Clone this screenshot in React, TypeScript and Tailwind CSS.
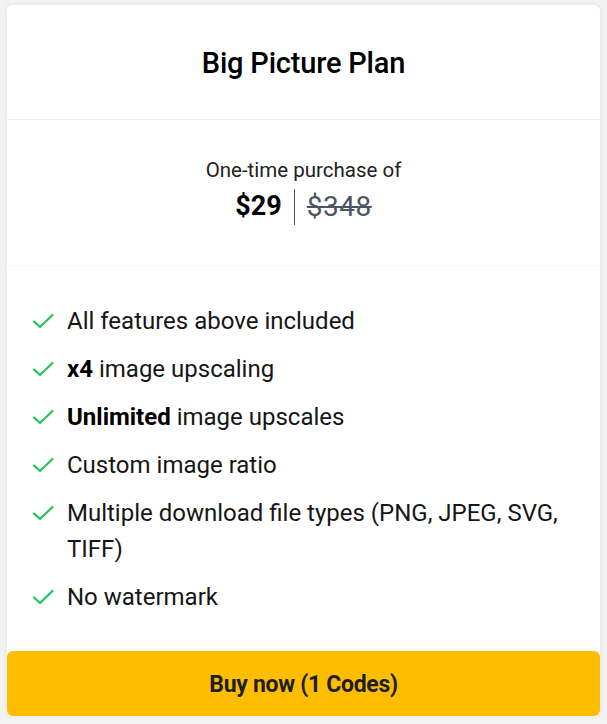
import React from 'react';

const features: { bold?: string; text: string }[] = [
  { text: 'All features above included' },
  { bold: 'x4', text: ' image upscaling' },
  { bold: 'Unlimited', text: ' image upscales' },
  { text: 'Custom image ratio' },
  { text: 'Multiple download file types (PNG, JPEG, SVG, TIFF)' },
  { text: 'No watermark' },
];

const Check = () => (
  <svg width="24" height="24" viewBox="0 0 24 24" fill="none" stroke="#1fc35a" strokeWidth="2.2" strokeLinecap="round" strokeLinejoin="round" className="shrink-0 mt-[6px]">
    <path d="M3 12.5l6 5.5L21.5 6" />
  </svg>
);

export default function App() {
  return (
    <div className="min-h-screen bg-[#f3f3f3] px-[7px] pt-[5px] pb-[7px] font-['Roboto',sans-serif]">
      <div className="bg-white rounded-md shadow-[0_0_6px_rgba(0,0,0,0.06)] flex flex-col">
        <div className="h-[115px] flex items-center justify-center border-b border-[#f0f0f0] pt-[4px]">
          <h2 className="text-[29px] font-medium text-black tracking-[-0.2px]">Big Picture Plan</h2>
        </div>

        <div className="h-[146px] flex flex-col items-center justify-center border-b border-[#f2f2f2] pb-[2px]">
          <p className="text-[20.5px] text-[#222] leading-[28px]">One-time purchase of</p>
          <div className="flex items-center mt-[2px]">
            <span className="text-[27px] font-bold text-black">$29</span>
            <span className="w-px h-[36px] bg-[#555] mx-[12px]" />
            <span className="text-[28px] text-[#4b5563] line-through decoration-[2px] tracking-[0.5px]">$348</span>
          </div>
        </div>

        <ul className="flex flex-col gap-[12px] pt-[37px] pb-[36px] pl-[24px] pr-[30px]">
          {features.map((f, i) => (
            <li key={i} className="flex gap-[12px] text-[24px] leading-[36px] text-[#161616]">
              <Check />
              <span>
                {f.bold && <b className="font-bold text-black">{f.bold}</b>}
                {f.text}
              </span>
            </li>
          ))}
        </ul>

        <button className="h-[65px] w-full rounded-md bg-[#ffbd00] text-[23px] font-bold text-[#1e1e1e] tracking-[-0.3px] pt-[4px]">
          Buy now (1 Codes)
        </button>
      </div>
    </div>
  );
}
